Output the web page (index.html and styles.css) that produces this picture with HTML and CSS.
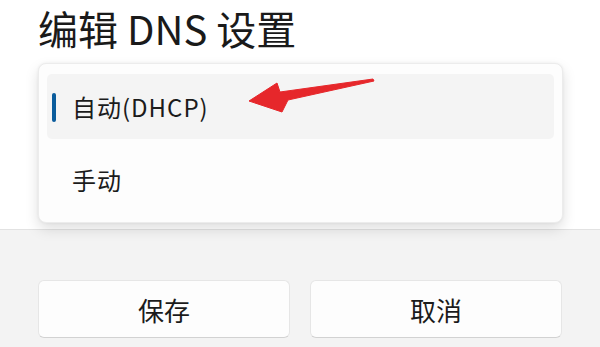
FILE: index.html
```html
<!DOCTYPE html>
<html lang="zh-CN">
<head>
<meta charset="utf-8">
<title>编辑 DNS 设置</title>
<link rel="stylesheet" href="styles.css">
</head>
<body>
<div class="page">
  <div class="main">
    <h1 class="title">编辑 DNS 设置</h1>
    <div class="menu">
      <div class="item selected"><span class="indicator"></span>自动(DHCP)</div>
      <div class="item">手动</div>
    </div>
    <svg class="arrow" width="132" height="42" viewBox="0 0 132 42" aria-hidden="true">
      <polygon points="4,27 32,9 35,18 128,5 129,7 43,26 37,38" fill="#e6272b" stroke="#e6272b" stroke-width="1" stroke-linejoin="round"/>
    </svg>
  </div>
  <div class="footer">
    <button class="btn">保存</button>
    <button class="btn">取消</button>
  </div>
</div>
</body>
</html>
```
FILE: styles.css
```css
* { box-sizing: border-box; }
html, body { margin: 0; padding: 0; background: #ffffff; }
body {
  font-family: "Noto Sans CJK SC", "Noto Sans", sans-serif;
  color: #1b1b1b;
}
.page {
  width: 600px;
  height: 347px;
  display: flex;
  flex-direction: column;
  overflow: hidden;
}
.main {
  position: relative;
  height: 229px;
  padding: 3px 37px 0 38px;
  background: #ffffff;
}
.title {
  margin: 0;
  font-size: 40px;
  line-height: 50px;
  font-weight: 400;
  color: #1a1a1a;
}
.menu {
  position: relative;
  z-index: 1;
  margin-top: 10px;
  width: 525px;
  height: 160px;
  padding: 10px 8px;
  display: flex;
  flex-direction: column;
  gap: 8px;
  background: #fdfdfd;
  border: 1px solid #ececec;
  border-radius: 8px;
  box-shadow: 0 6px 14px rgba(0, 0, 0, 0.13), 0 0 3px rgba(0, 0, 0, 0.06);
}
.item {
  position: relative;
  height: 65px;
  display: flex;
  align-items: center;
  padding-left: 25px;
  font-size: 24px;
  letter-spacing: 1px;
  border-radius: 5px;
  color: #1b1b1b;
}
.item.selected { background: #f4f4f4; }
.indicator {
  position: absolute;
  left: 5px;
  top: 19px;
  width: 4px;
  height: 29px;
  border-radius: 2px;
  background: #0a5c9c;
}
.arrow {
  position: absolute;
  left: 245px;
  top: 74px;
  z-index: 2;
}
.footer {
  flex: 1;
  background: #f3f3f3;
  border-top: 1px solid #e2e2e2;
  padding: 50px 38px 0 38px;
  display: grid;
  grid-template-columns: 1fr 1fr;
  column-gap: 20px;
  align-content: start;
}
.btn {
  height: 58px;
  font-family: "Noto Sans CJK SC", "Noto Sans", sans-serif;
  font-size: 26px;
  color: #1b1b1b;
  background: #fdfdfd;
  border: 1px solid #e6e6e6;
  border-bottom-color: #d2d2d2;
  border-radius: 6px;
  padding: 0;
}
```
